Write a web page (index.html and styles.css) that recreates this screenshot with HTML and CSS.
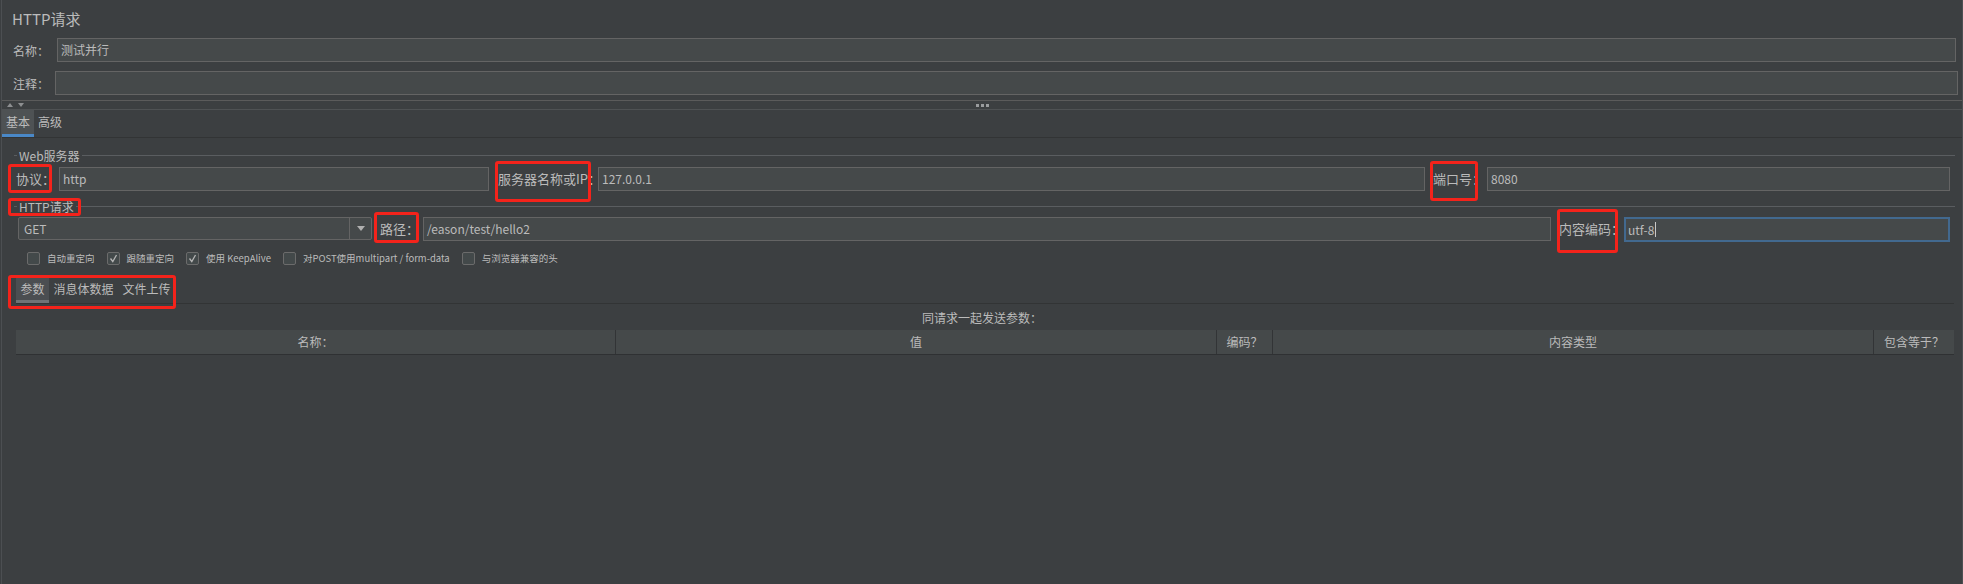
FILE: index.html
```html
<!DOCTYPE html>
<html lang="zh-CN">
<head>
<meta charset="utf-8">
<title>HTTP请求</title>
<link rel="stylesheet" href="styles.css">
</head>
<body>
<div class="app">
  <div class="head">
    <div class="title">HTTP请求</div>
    <div class="frow name">
      <div class="lbl">名称：</div>
      <div class="field">测试并行</div>
    </div>
    <div class="frow comment">
      <div class="lbl">注释：</div>
      <div class="field"></div>
    </div>
  </div>

  <div class="splitter">
    <div class="arrows"><span class="tri-up"></span><span class="tri-down"></span></div>
    <div class="grip"><span></span><span></span><span></span></div>
    <div></div>
  </div>

  <div class="tabs">
    <div class="tab active">基本</div>
    <div class="tab">高级</div>
  </div>

  <div class="panel">
    <div class="group"><span class="legend">Web服务器</span></div>
    <div class="row1">
      <div class="lbl mark mk-proto">协议：</div>
      <div class="field">http</div>
      <div class="lbl pad mark mk-server">服务器名称或IP：</div>
      <div class="field">127.0.0.1</div>
      <div class="lbl pad mark mk-port">端口号：</div>
      <div class="field">8080</div>
    </div>

    <div class="group second"><span class="legend mark mk-http">HTTP请求</span></div>
    <div class="row2">
      <div class="combo">
        <span class="combo-text">GET</span>
        <span class="combo-btn"><span class="tri-combo"></span></span>
      </div>
      <div class="lbl pad mark mk-path">路径：</div>
      <div class="field">/eason/test/hello2</div>
      <div class="lbl pad mark mk-enc">内容编码：</div>
      <div class="field focus">utf-8<span class="caret"></span></div>
    </div>

    <div class="checks">
      <div class="check"><span class="box"></span><span class="ctext">自动重定向</span></div>
      <div class="check"><span class="box"><svg viewBox="0 0 13 13" width="13" height="13"><polyline points="3.5,6.5 5.8,9.5 9.5,3" /></svg></span><span class="ctext">跟随重定向</span></div>
      <div class="check"><span class="box"><svg viewBox="0 0 13 13" width="13" height="13"><polyline points="3.5,6.5 5.8,9.5 9.5,3" /></svg></span><span class="ctext">使用 KeepAlive</span></div>
      <div class="check"><span class="box"></span><span class="ctext">对POST使用multipart / form-data</span></div>
      <div class="check"><span class="box"></span><span class="ctext">与浏览器兼容的头</span></div>
    </div>

    <div class="subtabs mark mk-tabs">
      <div class="stab active">参数</div>
      <div class="stab">消息体数据</div>
      <div class="stab">文件上传</div>
    </div>

    <div class="caption">同请求一起发送参数：</div>

    <div class="thead">
      <div class="th">名称：</div>
      <div class="th">值</div>
      <div class="th">编码？</div>
      <div class="th">内容类型</div>
      <div class="th">包含等于？</div>
    </div>
  </div>
</div>
</body>
</html>
```

FILE: styles.css
```css
*, *::before, *::after { box-sizing: border-box; }

html, body {
  margin: 0;
  padding: 0;
  background: #3c3f41;
}

body {
  font-family: "Noto Sans CJK SC", "Noto Sans", sans-serif;
  font-size: 12px;
  color: #bbbbbb;
}

.app {
  margin-left: 1px;
  border-left: 1px solid #4c4f52;
  border-right: 1px solid #4c4f52;
  height: 584px;
}

/* ---------- header ---------- */
.head {
  padding-bottom: 5px;
}

.title {
  height: 38px;
  line-height: 38px;
  padding-left: 10px;
  font-size: 15px;
}

.frow {
  display: flex;
  align-items: center;
  height: 24px;
}

.frow.name {
  padding-left: 11px;
  padding-right: 6px;
}

.frow.name .lbl { width: 44px; }

.frow.comment {
  margin-top: 9px;
  padding-left: 11px;
  padding-right: 4px;
}

.frow.comment .lbl { width: 42px; }

.lbl {
  font-size: 12px;
  white-space: nowrap;
}

.field {
  flex: 1;
  height: 24px;
  background: #45494a;
  border: 1px solid #646464;
  padding: 0 3px;
  line-height: 22px;
  font-size: 12px;
  white-space: nowrap;
  overflow: hidden;
}

/* ---------- splitter ---------- */
.splitter {
  height: 10px;
  border-top: 1px solid #5b5b5b;
  border-bottom: 1px solid #4f5254;
  display: grid;
  grid-template-columns: 1fr auto 1fr;
  align-items: center;
}

.arrows {
  display: flex;
  align-items: center;
  gap: 5px;
  padding-left: 5px;
}

.tri-up {
  width: 0;
  height: 0;
  border-left: 3.5px solid transparent;
  border-right: 3.5px solid transparent;
  border-bottom: 4px solid #8d8f91;
}

.tri-down {
  width: 0;
  height: 0;
  border-left: 3.5px solid transparent;
  border-right: 3.5px solid transparent;
  border-top: 4px solid #8d8f91;
}

.grip {
  display: flex;
  gap: 2px;
}

.grip span {
  width: 3px;
  height: 3px;
  background: #9a9c9e;
}

/* ---------- main tabs ---------- */
.tabs {
  display: flex;
  height: 28px;
  border-bottom: 1px solid #323435;
}

.tab {
  height: 27px;
  padding: 0 4px;
  line-height: 24px;
  font-size: 12px;
  border-bottom: 3px solid transparent;
}

.tab.active {
  background: #4e5254;
  border-bottom-color: #4a88c7;
}

/* ---------- panel ---------- */
.panel {
  padding-top: 10px;
}

.group {
  display: flex;
  align-items: center;
  height: 15px;
  margin-left: 12px;
  margin-right: 7px;
}

.group.second { margin-top: 8px; }

.group::before {
  content: "";
  width: 3px;
  height: 1px;
  background: #5a5d60;
}

.group::after {
  content: "";
  flex: 1;
  height: 1px;
  background: #5a5d60;
}

.legend {
  padding: 0 2px;
  line-height: 15px;
  height: 15px;
  font-size: 12px;
}

.row1 {
  display: grid;
  grid-template-columns: 43px 430px 109px 827px 62px 1fr;
  align-items: stretch;
  height: 24px;
  margin-top: 4px;
  padding-left: 14px;
  padding-right: 12px;
}

.row1 .lbl, .row2 .lbl {
  font-size: 13px;
  line-height: 24px;
  height: 24px;
}

.lbl.pad { padding-left: 8px; }
.row1 .lbl.pad.mk-server { padding-left: 9px; }

.row2 {
  display: grid;
  grid-template-columns: 354px 51px 1128px 73px 1fr;
  align-items: stretch;
  height: 24px;
  margin-top: 3px;
  padding-left: 16px;
  padding-right: 12px;
}

.combo {
  display: flex;
  height: 23px;
  background: #45494a;
  border: 1px solid #646464;
  border-radius: 2px;
}

.combo-text {
  flex: 1;
  padding-left: 5px;
  line-height: 21px;
}

.combo-btn {
  width: 22px;
  border-left: 1px solid #646464;
  display: flex;
  align-items: center;
  justify-content: center;
}

.tri-combo {
  width: 0;
  height: 0;
  border-left: 4.5px solid transparent;
  border-right: 4.5px solid transparent;
  border-top: 5px solid #b0b0b0;
}

.field.focus {
  border: 2px solid #42698f;
  padding: 0 2px;
  line-height: 20px;
  height: 25px;
  display: flex;
  align-items: center;
}

.caret {
  display: inline-block;
  width: 1px;
  height: 15px;
  background: #c8c8c8;
  margin-left: 1px;
}

/* ---------- checkboxes ---------- */
.checks {
  display: flex;
  align-items: center;
  height: 13px;
  margin-top: 11px;
  padding-left: 25px;
  gap: 12px;
}

.check {
  display: flex;
  align-items: center;
}

.box {
  width: 13px;
  height: 13px;
  border: 1px solid #6b6b6b;
  border-radius: 2px;
  background: #43494a;
  margin-right: 7px;
  position: relative;
}

.box svg {
  position: absolute;
  left: -1px;
  top: -1px;
}

.box polyline {
  fill: none;
  stroke: #b5b5b5;
  stroke-width: 1.3;
}

.ctext {
  font-size: 9.5px;
  line-height: 13px;
  white-space: nowrap;
}

/* ---------- sub tabs ---------- */
.subtabs {
  display: flex;
  height: 27px;
  margin-top: 12px;
  margin-left: 14px;
  margin-right: 8px;
  border-bottom: 1px solid #323435;
}

.stab {
  height: 26px;
  padding: 0 4.5px;
  line-height: 24px;
  font-size: 12px;
  border-bottom: 3px solid transparent;
}

.stab.active {
  background: #4b4e51;
  border-bottom-color: #6f7376;
}

.caption {
  height: 26px;
  line-height: 27px;
  text-align: center;
  font-size: 12px;
}

/* ---------- table header ---------- */
.thead {
  display: grid;
  grid-template-columns: 600px 601px 56px 601px 1fr;
  height: 25px;
  margin-left: 14px;
  margin-right: 8px;
  background: #45494a;
  border-bottom: 1px solid #2f3133;
}

.th {
  text-align: center;
  line-height: 24px;
  font-size: 12px;
  border-right: 1px solid #323436;
}

.th:last-child { border-right: none; }

/* ---------- red annotation boxes ---------- */
.mark { position: relative; }

.mark::after {
  content: "";
  position: absolute;
  border: 3px solid #f4231b;
  border-radius: 3px;
  pointer-events: none;
}

.mk-proto::after  { left: -8px; top: -3px; width: 44px; height: 29px; }
.mk-server::after { left: 6px;  top: -6px; width: 96px; height: 41px; }
.mk-port::after   { left: 5px;  top: -6px; width: 48px; height: 40px; }
.mk-http::after   { left: -9px; top: -1px; width: 73px; height: 18px; }
.mk-path::after   { left: 2px;  top: -5px; width: 45px; height: 31px; }
.mk-enc::after    { left: 6px;  top: -8px; width: 61px; height: 44px; }
.mk-tabs::after   { left: -8px; top: -2px; width: 168px; height: 34px; }
```
